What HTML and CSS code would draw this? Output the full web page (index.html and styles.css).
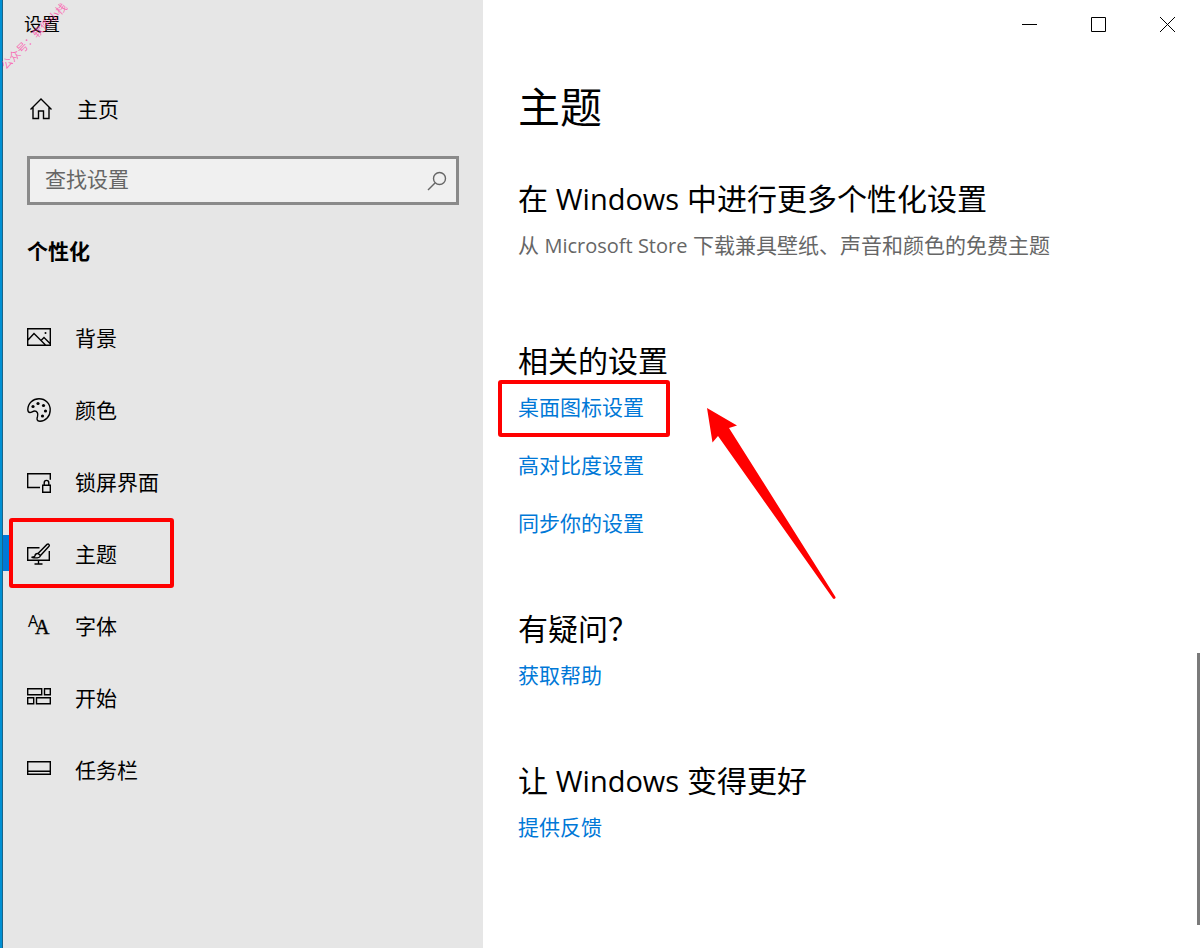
FILE: index.html
```html
<!DOCTYPE html>
<html lang="zh-CN">

<head>
    <meta charset="UTF-8">
    <meta name="viewport" content="width=device-width, initial-scale=1.0">
    <title>设置</title>
    <link rel="stylesheet" href="styles.css">
</head>

<body>
    <div class="window">
        <aside class="sidebar">
            <div class="caption">设置</div>
            <span class="watermark">公众号：软件小栈</span>

            <a class="home" href="#">
                <svg class="icon" viewBox="0 0 24 24">
                    <path d="M1.500 12.500L12 2l10.500 10.500M4 10.500V21.500h5.500V14h5v7.500H20V10.500" />
                </svg>
                <span>主页</span>
            </a>

            <div class="search">
                <input type="text" placeholder="查找设置" aria-label="查找设置">
                <svg class="glass" viewBox="0 0 20 20">
                    <circle cx="12.500" cy="7.500" r="6" />
                    <path d="M8 12L1 19" />
                </svg>
            </div>

            <h2 class="group">个性化</h2>

            <nav>
                <a class="item" href="#">
                    <svg class="icon" viewBox="0 0 24 24">
                        <path d="M.7 2.700h22.600v16.600H.7zM1 14l6-6.500L18.500 19M14 14.500l3-3 6 6" />
                        <circle class="dot" cx="18.500" cy="7" r="1" />
                    </svg>
                    <span>背景</span>
                </a>
                <a class="item" href="#">
                    <svg class="icon" viewBox="0 0 24 24">
                        <path d="M.8 11.500C1 5 6 .8 12 .8c6.500 0 11.200 4.700 11.200 11.200S18.500 23.200 13 23.200c-3.500 0-3.300-2.500-2.500-4.700 1-3-.5-5.500-2.800-5.500-2 0-3 1.500-4.700 1.500C1.300 14.500.8 13 .8 11.500z" />
                        <circle class="dot" cx="6" cy="8.500" r="1.600" />
                        <circle class="dot" cx="11" cy="5.500" r="1.600" />
                        <circle class="dot" cx="16.500" cy="7.500" r="1.600" />
                        <circle class="dot" cx="18.500" cy="13" r="1.600" />
                        <circle class="dot" cx="15.500" cy="18" r="1.600" />
                    </svg>
                    <span>颜色</span>
                </a>
                <a class="item" href="#">
                    <svg class="icon" viewBox="0 0 24 24">
                        <path d="M13 17.500H.7V3.700h22.600v6M15.700 15.200h7.600v7.100h-7.600zM17.200 15v-2c0-3.500 4.600-3.500 4.600 0v2" />
                    </svg>
                    <span>锁屏界面</span>
                </a>
                <a class="item active" href="#">
                    <svg class="icon" viewBox="0 0 24 24">
                        <path d="M12.500 5.700H.7v12.600h21.600V9M11.500 18.500v3.500M7.500 22h8" />
                        <path d="M11 11.500L20 2.400c1.500-1 3 .4 2 1.900L13.500 13.500zM11 11.500c-2.500-.3-3 1.500-3.200 2.500-.3 1-1.500 1.300-3.300 1.300 4 1 8.500 1 9-1.800z" />
                    </svg>
                    <span>主题</span>
                </a>
                <a class="item" href="#">
                    <svg class="icon letters" viewBox="0 0 24 24">
                        <text class="small" x="1" y="13">A</text>
                        <text class="large" x="8" y="20">A</text>
                    </svg>
                    <span>字体</span>
                </a>
                <a class="item" href="#">
                    <svg class="icon" viewBox="0 0 24 24">
                        <path d="M.7 2.700h14v6H.7zM17.500 2.700h5.800v6h-5.800zM.7 11.700h6v6h-6zM9.500 11.700h13.800v6H9.500z" />
                    </svg>
                    <span>开始</span>
                </a>
                <a class="item" href="#">
                    <svg class="icon" viewBox="0 0 24 24">
                        <path d="M.7 3.700h22.600v12.600H.7zM1 13.200h22" />
                    </svg>
                    <span>任务栏</span>
                </a>
            </nav>
        </aside>

        <main class="content">
            <div class="controls">
                <button aria-label="最小化"><svg viewBox="0 0 15 15"><path d="M0 7.500h15" /></svg></button>
                <button aria-label="最大化"><svg viewBox="0 0 15 15"><path d="M.5.5h14v14H.5z" /></svg></button>
                <button aria-label="关闭"><svg viewBox="0 0 15 15"><path d="M0 0l15 15M15 0L0 15" /></svg></button>
            </div>

            <h1>主题</h1>

            <section>
                <h2>在 <span class="latin">Windows</span> 中进行更多个性化设置</h2>
                <p>从 <span class="latin">Microsoft Store</span> 下载兼具壁纸、声音和颜色的免费主题</p>
            </section>
            <section>
                <h2>相关的设置</h2>
                <ul>
                    <li><a class="marked" href="#">桌面图标设置</a></li>
                    <li><a href="#">高对比度设置</a></li>
                    <li><a href="#">同步你的设置</a></li>
                </ul>
            </section>
            <section>
                <h2>有疑问？</h2>
                <ul>
                    <li><a href="#">获取帮助</a></li>
                </ul>
            </section>
            <section>
                <h2>让 <span class="latin">Windows</span> 变得更好</h2>
                <ul>
                    <li><a href="#">提供反馈</a></li>
                </ul>
            </section>

            <svg class="arrow" viewBox="0 0 130 192">
                <path d="M0 0l30 17.500-8 2.500L128.500 189c.5 1.500-1.500 2.500-2.500 1.500L11 28l-5.500 6.500z" />
            </svg>
            <div class="scrollbar"></div>
        </main>
    </div>
</body>

</html>
```
FILE: styles.css
```css
*,
*::before,
*::after {
    box-sizing: border-box;
}

body {
    margin: 0;
    color: #000;
    background-color: #fff;
    font-family: "Open Sans", "Noto Sans CJK SC", sans-serif;
    font-size: 21px;
}

h1,
h2,
p,
ul {
    margin: 0;
    padding: 0;
    font-weight: 400;
}

a {
    text-decoration: none;
}

.window {
    display: flex;
    min-height: 100vh;
    /* strip of desktop left of the window */
    border-left: 3px solid #0090d4;
}

/* sidebar */
.sidebar {
    position: relative;
    flex: none;
    width: 480px;
    padding: 0 24px;
    background-color: #e6e6e6;
    box-shadow: -1px 0 #1c6487;
}

.caption {
    height: 49px;
    margin-left: -3px;
    font-size: 18px;
    line-height: 49px;
}

.watermark {
    position: absolute;
    left: -13px;
    top: 28px;
    color: rgba(255, 60, 160, 0.7);
    font-size: 11px;
    line-height: 16px;
    white-space: nowrap;
    transform: rotate(-45deg);
}

.home,
.item {
    display: flex;
    align-items: center;
    gap: 24px;
    height: 72px;
    color: #000;
}

.home span,
.item span {
    padding-bottom: 3px;
}

.home {
    margin-top: 24px;
    padding-left: 2px;
}

.icon {
    flex: none;
    width: 24px;
    height: 24px;
    fill: none;
    stroke: #000;
    stroke-width: 1.4;
}

.icon .dot {
    fill: #000;
    stroke: none;
}

.letters {
    overflow: visible;
    fill: #000;
    stroke: none;
}

.small {
    font: 16px "Open Sans", sans-serif;
}

.large {
    font: 20px "Liberation Serif", serif;
    stroke: #000;
    stroke-width: 0.4;
}

.search {
    display: flex;
    align-items: center;
    height: 49px;
    margin-top: 11px;
    padding: 0 9px 0 15px;
    border: 3px solid #8a8a8a;
    background-color: #f0f0f0;
}

.search input {
    flex: 1;
    min-width: 0;
    padding: 0 0 3px;
    border: none;
    outline: none;
    background: none;
    font: inherit;
}

.search input::placeholder {
    color: #666;
    opacity: 1;
}

.glass {
    width: 20px;
    height: 20px;
    fill: none;
    stroke: #666;
    stroke-width: 1.4;
}

.group {
    margin: 23px 0 27px;
    font-size: 21px;
    font-weight: 700;
    line-height: 47px;
}

.item {
    position: relative;
}

.active::before {
    content: "";
    position: absolute;
    left: -24px;
    top: 17px;
    width: 7px;
    height: 36px;
    background-color: #0078d7;
}

.active::after {
    content: "";
    position: absolute;
    left: -18px;
    top: 0;
    width: 165px;
    height: 70px;
    border: 4px solid #f00;
    border-radius: 3px;
}

/* content */
.content {
    position: relative;
    flex: 1;
    padding-left: 35px;
}

.controls {
    display: flex;
    justify-content: flex-end;
    height: 49px;
    padding-right: 1px;
}

.controls button {
    display: flex;
    align-items: center;
    justify-content: center;
    width: 69px;
    padding: 0;
    border: none;
    background: none;
}

.controls svg {
    width: 15px;
    height: 15px;
    fill: none;
    stroke: #000;
}

h1 {
    margin: 28px 0 39px;
    font-size: 42px;
    line-height: 60px;
}

section {
    margin-bottom: 48px;
}

section h2 {
    font-size: 30px;
    line-height: 46px;
}

section p {
    padding-bottom: 21px;
    color: #666;
    line-height: 46px;
}

/* latin runs sit a touch smaller than the chinese text */
h2 .latin {
    font-size: 29px;
}

p .latin {
    font-size: 20px;
}

ul {
    list-style: none;
}

li {
    height: 58px;
    line-height: 46px;
}

li a {
    position: relative;
    display: inline-block;
    color: #0078d7;
}

.marked::after {
    content: "";
    position: absolute;
    inset: -4px -26px -7px -20px;
    border: 4px solid #f00;
    border-radius: 3px;
}

.arrow {
    position: absolute;
    left: 224px;
    top: 408px;
    width: 130px;
    height: 192px;
    fill: #f00;
}

.scrollbar {
    position: absolute;
    right: 3px;
    bottom: 23px;
    width: 3px;
    height: 272px;
    background-color: #7a7a7a;
}
```
